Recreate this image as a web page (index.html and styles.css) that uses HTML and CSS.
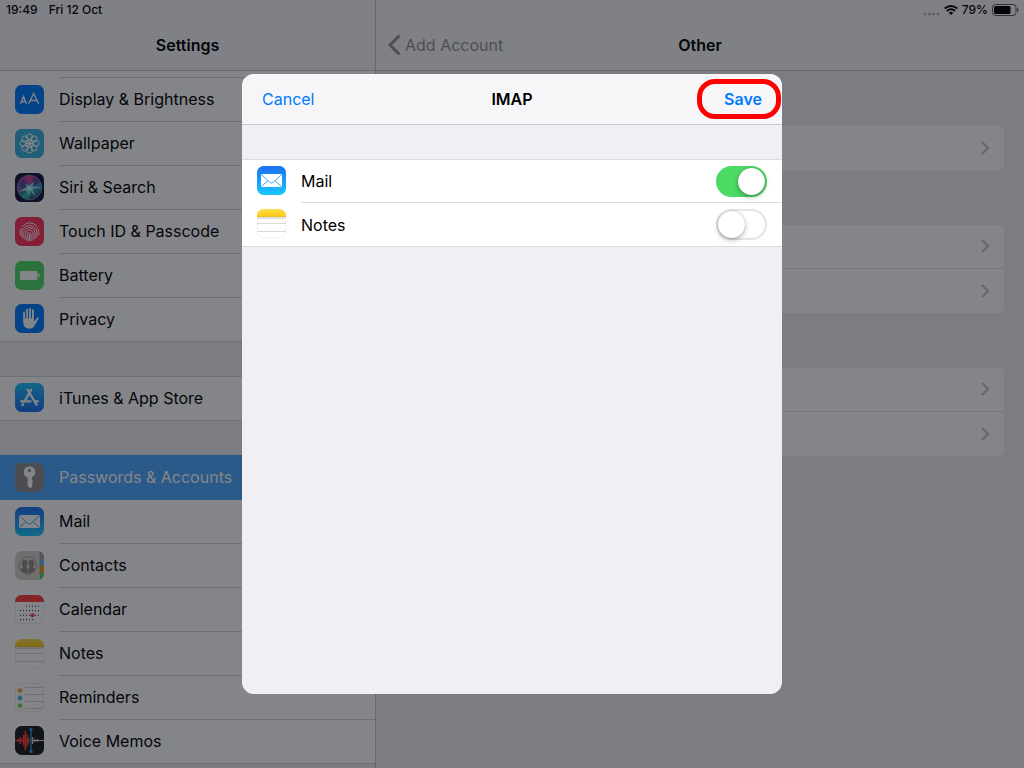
FILE: index.html
```html
<!doctype html>
<html lang="en">
	<head>
		<meta charset="utf-8">
		<meta name="viewport" content="width=device-width, initial-scale=1">

		<title>Settings</title>

		<link rel="stylesheet" href="styles.css">
	</head>

	<body>

		<!-- shared shapes -->
		<svg class="sprites" width="0" height="0" aria-hidden="true">
			<defs>
				<linearGradient id="mail-bg" x1="0" y1="0" x2="0" y2="1">
					<stop offset="0" stop-color="#1d6ff2"/>
					<stop offset="1" stop-color="#1ac8fc"/>
				</linearGradient>
				<linearGradient id="store-bg" x1="0" y1="0" x2="0" y2="1">
					<stop offset="0" stop-color="#19c0fb"/>
					<stop offset="1" stop-color="#1d6df0"/>
				</linearGradient>
				<linearGradient id="notes-bg" x1="0" y1="0" x2="0" y2="1">
					<stop offset="0" stop-color="#ffdc4e"/>
					<stop offset="1" stop-color="#fdc90c"/>
				</linearGradient>
				<linearGradient id="siri-ball" x1="0.3" y1="0" x2="0.6" y2="1">
					<stop offset="0" stop-color="#8a3f9e"/>
					<stop offset="0.45" stop-color="#4a4a8c"/>
					<stop offset="0.7" stop-color="#2b8f96"/>
					<stop offset="1" stop-color="#2a3f80"/>
				</linearGradient>
				<radialGradient id="siri-glow">
					<stop offset="0" stop-color="#fff"/>
					<stop offset="0.4" stop-color="#8ff0ee" stop-opacity="0.7"/>
					<stop offset="1" stop-color="#35c8c8" stop-opacity="0"/>
				</radialGradient>
			</defs>
			<symbol id="icon-mail" viewBox="0 0 29 29">
				<rect width="29" height="29" rx="6.5" fill="url(#mail-bg)"/>
				<rect x="4" y="8" width="21" height="13" rx="1.6" fill="#fff"/>
				<path d="M4.8 8.8l8 7.600q1.700 1.400 3.400 0l8-7.600M4.800 20.200l6.300-5.600M24.200 20.200l-6.300-5.600" fill="none" stroke="#2d97f6" stroke-width="0.9"/>
			</symbol>
			<symbol id="icon-notes" viewBox="0 0 29 29">
				<rect x="0.25" y="0.25" width="28.5" height="28.5" rx="6.3" fill="#fff" stroke="#dcdcdc" stroke-width="0.5"/>
				<path d="M0 8V6.5A6.5 6.5 0 0 1 6.5 0h16A6.5 6.5 0 0 1 29 6.5V8z" fill="url(#notes-bg)"/>
				<path d="M0 8h29" stroke="#bfae72" stroke-width="0.7"/>
				<path d="M1 9.6h27" stroke="#aaa" stroke-width="0.8" stroke-dasharray="0.8 0.8"/>
				<path d="M0 14.500h29M0 22.500h29" stroke="#cfcfcf" stroke-width="0.8"/>
			</symbol>
			<symbol id="chevron" viewBox="0 0 8 14">
				<path d="M1 1l6 6-6 6" fill="none" stroke="currentColor" stroke-width="2"/>
			</symbol>
		</svg>

		<div class="screen">
			<aside class="sidebar">
				<div class="status">
					<span>19:49</span>
					<span>Fri 12 Oct</span>
				</div>
				<header class="navbar">
					<h1>Settings</h1>
				</header>

				<nav class="menu">
					<div class="group first">
						<a class="row" href="#">
							<svg class="icon" viewBox="0 0 29 29">
								<rect width="29" height="29" rx="6.5" fill="#007aff"/>
								<path d="M5.500 18.800l3-7.300 3 7.300M6.500 16.500h4M13.500 18.800L18.600 8.500l5.100 10.300M15.100 15.500h7" fill="none" stroke="#fff" stroke-width="1.300"/>
							</svg>
							<span class="label">Display &amp; Brightness</span>
						</a>
						<a class="row" href="#">
							<svg class="icon" viewBox="0 0 29 29">
								<rect width="29" height="29" rx="6.5" fill="#38b2dc"/>
								<g fill="none" stroke="#fff" stroke-width="1">
									<circle cx="14.5" cy="8" r="3"/>
									<circle cx="19.1" cy="9.9" r="3"/>
									<circle cx="21" cy="14.5" r="3"/>
									<circle cx="19.1" cy="19.1" r="3"/>
									<circle cx="14.5" cy="21" r="3"/>
									<circle cx="9.9" cy="19.1" r="3"/>
									<circle cx="8" cy="14.5" r="3"/>
									<circle cx="9.9" cy="9.9" r="3"/>
									<circle cx="14.5" cy="14.5" r="3.8"/>
									<path d="M14.5 10.7v7.6M10.7 14.5h7.6M11.8 11.8l5.4 5.4M17.2 11.8l-5.4 5.4"/>
								</g>
								<circle cx="14.5" cy="14.5" r="1.6" fill="#fff"/>
							</svg>
							<span class="label">Wallpaper</span>
						</a>
						<a class="row" href="#">
							<svg class="icon" viewBox="0 0 29 29">
								<rect width="29" height="29" rx="6.5" fill="#16173a"/>
								<circle cx="14.5" cy="14.5" r="12.200" fill="url(#siri-ball)" stroke="#8c91b8" stroke-width="0.8"/>
								<path d="M14.500 14L9 4.500q5-3 9.500-.5z" fill="#e0409c" fill-opacity="0.7"/>
								<path d="M15 15l10.500-6q1.500 3.500 1 7z" fill="#3c9fe0" fill-opacity="0.6"/>
								<path d="M14 15.500L4.500 20q-2-3-1.500-6z" fill="#c65cc0" fill-opacity="0.5"/>
								<path d="M14 15l-7.500 9q3 2.500 6.500 2.500z" fill="#2fd6b4" fill-opacity="0.600"/>
								<path d="M3.500 18.500q5-1.500 8.500-5l-2-3 4.500 2.500 4.500-5-1.500 5.500 8.500.8-8.500 1.600 3 8-5.500-6.700-.8 8.500-1.800-8.200z" fill="#a8f4f0" fill-opacity="0.850"/>
								<circle cx="14.500" cy="15" r="5" fill="url(#siri-glow)"/>
							</svg>
							<span class="label">Siri &amp; Search</span>
						</a>
						<a class="row" href="#">
							<svg class="icon" viewBox="0 0 29 29">
								<rect width="29" height="29" rx="6.5" fill="#fc3158"/>
								<g fill="none" stroke="#fff" stroke-width="1" stroke-linecap="round">
									<path d="M5.600 17.800c-.8-2-.6-4.400.4-6.200M7.300 9.600c4-5.300 11.600-4.900 14.800.4M23 11.800c1 2 1 4 .7 6"/>
									<path d="M7.300 20.300c-.5-2.500-1-5.700.7-8.300 3-4.700 10.500-4.400 13 .6 1.300 2.700.9 5.300.7 7.500"/>
									<path d="M9.200 21.800c-.3-3-1.200-6 .4-8.500 2.400-3.600 8-3.400 9.800.4 1.100 2.500.6 5.200.4 8"/>
									<path d="M11.200 23c0-3-1.100-6.200 0-8.100 1.500-2.600 5.300-2.300 6.500.2.900 2.200.5 5 .2 7.900"/>
									<path d="M13 23.600c.1-2.500-.9-6 .2-7.500.8-.9 2.200-.7 2.700.5.500 2 .2 4.500.1 7M14.500 17.500v6.300"/>
								</g>
							</svg>
							<span class="label">Touch ID &amp; Passcode</span>
						</a>
						<a class="row" href="#">
							<svg class="icon" viewBox="0 0 29 29">
								<rect width="29" height="29" rx="6.5" fill="#4cd964"/>
								<rect x="5" y="10" width="17.500" height="9" rx="1" fill="#fff"/>
								<path d="M23.300 12.700q1.700.3 1.700 1.800t-1.700 1.800z" fill="#fff"/>
							</svg>
							<span class="label">Battery</span>
						</a>
						<a class="row" href="#">
							<svg class="icon" viewBox="0 0 29 29">
								<rect width="29" height="29" rx="6.5" fill="#007aff"/>
								<g fill="none" stroke="#fff" stroke-width="2" stroke-linecap="round">
									<path d="M9.200 16V8.500M12.100 15V5.700M15 15V5M17.900 16V6.300"/>
									<path d="M19.800 18.500l3-4.300"/>
								</g>
								<path d="M8.200 14h10.700v3.800l1.300-1.500 2 .8-3 5.200q-1.300 2.400-4.500 2.400-6.500 0-6.500-6.500z" fill="#fff"/>
								<path d="M10.650 8v6.500M13.550 6v8.500M16.450 6v8.500" stroke="#007aff" stroke-width="0.8"/>
							</svg>
							<span class="label">Privacy</span>
						</a>
					</div>

					<div class="group">
						<a class="row" href="#">
							<svg class="icon" viewBox="0 0 29 29">
								<rect width="29" height="29" rx="6.5" fill="url(#store-bg)"/>
								<g fill="none" stroke="#fff" stroke-width="2.2" stroke-linecap="round">
									<path d="M12.700 6.600l8.800 15.200M16.300 6.600L9.500 18.400M8 21l-.7 1.300"/>
									<path d="M6 18.400h9.600M19.700 18.400H23"/>
								</g>
							</svg>
							<span class="label">iTunes &amp; App Store</span>
						</a>
					</div>

					<div class="group">
						<a class="row selected" href="#" aria-current="page">
							<svg class="icon" viewBox="0 0 29 29">
								<rect width="29" height="29" rx="6.5" fill="#8e8e93"/>
								<path fill-rule="evenodd" d="M14.500 3.500a5.600 5.600 0 0 1 2.400 10.700v2.300l1.200 1.200-1.200 1.300 1.200 1.300-1.200 1.300.7 1.500-2.100 2.300-2.900-2.400V14.400A5.600 5.600 0 0 1 14.500 3.500zm0 2.200a1.700 1.700 0 1 0 0 3.400 1.700 1.700 0 0 0 0-3.400z" fill="#fff"/>
							</svg>
							<span class="label">Passwords &amp; Accounts</span>
						</a>
						<a class="row" href="#">
							<svg class="icon"><use href="#icon-mail"/></svg>
							<span class="label">Mail</span>
						</a>
						<a class="row" href="#">
							<svg class="icon" viewBox="0 0 29 29">
								<rect width="29" height="29" rx="6.5" fill="#d5d3cc"/>
								<path d="M25 .5Q29 2 29 6.500V8h-4z" fill="#a5a39c"/>
								<path d="M25 8h4v7h-4z" fill="#5cb8f5"/>
								<path d="M25 15h4v7h-4z" fill="#fd9a10"/>
								<path d="M25 22h4q0 5-4 6.500z" fill="#4cd964"/>
								<path d="M25 .5v28" stroke="#8c8a84" stroke-width="0.6"/>
								<circle cx="12.800" cy="14.500" r="8.800" fill="none" stroke="#95938c" stroke-width="0.8"/>
								<path d="M9.600 9c2.800 0 3.200 2 2.900 4.200-.2 1.600-1 1.900-.9 3.100.1 1 1.300 1.100 1.300 2.200v3.800Q7 22.500 5.500 17.800c1-.6 2.200-.5 2.300-1.500 0-1-.7-1.500-.9-3C6.600 11 7 9 9.600 9z" fill="#8f8d86"/>
								<path d="M16.200 9c2.700 0 3 2.100 2.700 4.300-.2 1.500-.9 2-.9 3 .1 1 1.300.9 2.200 1.500q-1.600 4.400-6.700 4.600v-4c0-1 1.200-1.200 1.200-2.100s-.8-1.500-1-3C13.400 11 13.700 9 16.200 9z" fill="#8f8d86"/>
							</svg>
							<span class="label">Contacts</span>
						</a>
						<a class="row" href="#">
							<svg class="icon" viewBox="0 0 29 29">
								<rect x="0.25" y="0.25" width="28.5" height="28.5" rx="6.3" fill="#fff" stroke="#d2d2d2" stroke-width="0.5"/>
								<path d="M0 7V6.500A6.500 6.500 0 0 1 6.500 0h16A6.500 6.500 0 0 1 29 6.500V7z" fill="#fc3d39"/>
								<path d="M11 11.200h13M5 15.600h19M5 20.200h19M5 24.700h13.500" stroke="#222" stroke-width="1" stroke-dasharray="1 2"/>
								<circle cx="17.500" cy="20.200" r="2" fill="#fc3d39"/>
							</svg>
							<span class="label">Calendar</span>
						</a>
						<a class="row" href="#">
							<svg class="icon"><use href="#icon-notes"/></svg>
							<span class="label">Notes</span>
						</a>
						<a class="row" href="#">
							<svg class="icon" viewBox="0 0 29 29">
								<rect x="0.25" y="0.25" width="28.5" height="28.5" rx="6.3" fill="#fff" stroke="#d2d2d2" stroke-width="0.5"/>
								<path d="M10 4.500h18M10 11.500h19M10 18.500h19M10 25.500h17.500" stroke="#c4c4c4" stroke-width="0.8"/>
								<circle cx="5" cy="7.500" r="2.300" fill="#fd9426" stroke="#fed09c"/>
								<circle cx="5" cy="15" r="2.300" fill="#1badf8" stroke="#9bdcfb"/>
								<circle cx="5" cy="22.500" r="2.300" fill="#63da38" stroke="#b8efa5"/>
							</svg>
							<span class="label">Reminders</span>
						</a>
						<a class="row" href="#">
							<svg class="icon" viewBox="0 0 29 29">
								<rect width="29" height="29" rx="6.5" fill="#1c1c1e"/>
								<path d="M0 14.500h3M3.500 13v3M5.200 11v7M6.900 12.500v4M8.600 9v10.500M10.300 5v19M12 8v13M13.700 11.500v6" stroke="#fb3b35" stroke-width="1.500"/>
								<path d="M17.500 11v7M19.200 12.500v4M20.900 13.500v2M22.600 13v3M16 14.500h13" stroke="#d8d8da" stroke-width="1"/>
								<path d="M16 3.500v22" stroke="#1badf8" stroke-width="1.200"/>
								<circle cx="16" cy="3.500" r="1.600" fill="#1badf8"/>
								<circle cx="16" cy="25.500" r="1.600" fill="#1badf8"/>
							</svg>
							<span class="label">Voice Memos</span>
						</a>
					</div>
				</nav>
			</aside>

			<main class="detail">
				<div class="status right">
					<svg width="17" height="4" viewBox="0 0 17 4">
						<g fill="#b4b4b6">
							<circle cx="2" cy="2" r="1.6"/>
							<circle cx="6.3" cy="2" r="1.6"/>
							<circle cx="10.6" cy="2" r="1.6"/>
							<circle cx="14.9" cy="2" r="1.6"/>
						</g>
					</svg>
					<svg width="14" height="10" viewBox="0 0 14 10">
						<g fill="none" stroke="#000" stroke-width="1.9">
							<path d="M.7 3.600q6.300-5 12.600 0"/>
							<path d="M2.900 6q4.100-3.300 8.200 0"/>
						</g>
						<path d="M4.700 7.700q2.300-1.800 4.600 0L7 10z"/>
					</svg>
					<span>79%</span>
					<svg width="27" height="12" viewBox="0 0 27 12">
						<rect x="0.5" y="0.5" width="23.5" height="11" rx="3" fill="none" stroke="#5c5c60"/>
						<rect x="2" y="2" width="16.5" height="8" rx="1.5"/>
						<path d="M25 4q1.600.5 1.600 2T25 8z" fill="#5c5c60"/>
					</svg>
				</div>
				<header class="navbar">
					<button class="back" type="button">
						<svg width="13" height="22" viewBox="0 0 13 22">
							<path d="M11.500 1.500L2 11l9.500 9.500" fill="none" stroke="currentColor" stroke-width="3"/>
						</svg>
						Add Account
					</button>
					<h2>Other</h2>
				</header>

				<div class="cards">
					<div class="card">
						<a href="#" aria-label="Open"><svg class="chevron"><use href="#chevron"/></svg></a>
					</div>
					<div class="card">
						<a href="#" aria-label="Open"><svg class="chevron"><use href="#chevron"/></svg></a>
						<a href="#" aria-label="Open"><svg class="chevron"><use href="#chevron"/></svg></a>
					</div>
					<div class="card">
						<a href="#" aria-label="Open"><svg class="chevron"><use href="#chevron"/></svg></a>
						<a href="#" aria-label="Open"><svg class="chevron"><use href="#chevron"/></svg></a>
					</div>
				</div>
			</main>
		</div>

		<div class="overlay">
			<form class="dialog" role="dialog" aria-labelledby="dialog-title">
				<header class="dialog-bar">
					<button class="cancel" type="button">Cancel</button>
					<h2 id="dialog-title">IMAP</h2>
					<button class="save" type="button">Save</button>
					<span class="highlight"></span>
				</header>
				<div class="group">
					<label class="row">
						<svg class="icon"><use href="#icon-mail"/></svg>
						<span class="label">Mail</span>
						<input class="switch" type="checkbox" checked>
					</label>
					<label class="row">
						<svg class="icon"><use href="#icon-notes"/></svg>
						<span class="label">Notes</span>
						<input class="switch" type="checkbox">
					</label>
				</div>
			</form>
		</div>

	</body>
</html>
```
FILE: styles.css
```css
* {
	box-sizing: border-box;
}

html, body {
	margin: 0;
	height: 100%;
	overflow: hidden;
}

body {
	font-family: Inter, "Liberation Sans", sans-serif;
	font-size: 16px;
	line-height: 20px;
	color: #000;
	background-color: #efeff2;
}

h1, h2 {
	margin: 0;
	font-size: 16px;
	font-weight: 600;
}

button {
	font: inherit;
	padding: 0;
	border: none;
	background: none;
	cursor: pointer;
}

a {
	color: inherit;
	text-decoration: none;
}

.sprites {
	position: absolute;
}

.screen {
	display: flex;
	height: 100%;
}

/* panes */

.sidebar {
	flex: none;
	width: 376px;
	border-right: 1px solid #c4c4c8;
	overflow: hidden;
}

.detail {
	flex: 1;
	overflow: hidden;
}

.status {
	display: flex;
	align-items: center;
	gap: 11px;
	height: 20px;
	padding: 0 5px 0 6px;
	font-size: 12px;
	font-weight: 500;
	background-color: #f7f7f8;
}

.status.right {
	justify-content: flex-end;
	gap: 4px;
}

.status.right svg:first-child {
	margin-top: 8px;
}

.navbar {
	display: grid;
	grid-template-columns: 1fr auto 1fr;
	align-items: center;
	height: 51px;
	padding: 0 12px;
	background-color: #f7f7f8;
	border-bottom: 1px solid #c8c8cc;
}

.navbar h1, .navbar h2 {
	grid-column: 2;
}

.back {
	display: flex;
	align-items: center;
	gap: 4px;
	color: #929292;
}

/* rows */

.group {
	margin-top: 34px;
	background-color: #fff;
	border-top: 1px solid #d4d4d8;
}

.group.first {
	margin-top: 0;
	padding-top: 7px;
	border-top: none;
}

.group.first .row:first-child .label {
	box-shadow: 0 -1px #d4d4d8;
}

.row {
	display: flex;
	align-items: center;
	gap: 15px;
	height: 44px;
	padding-left: 15px;
}

.row:last-child {
	border-bottom: 1px solid #d4d4d8;
}

.icon {
	flex: none;
	width: 29px;
	height: 29px;
	margin-bottom: 2px;
}

.label {
	flex: 1;
	align-self: stretch;
	display: flex;
	align-items: center;
	padding-bottom: 1px;
	border-bottom: 1px solid #d4d4d8;
}

.row:last-child .label {
	border-bottom: none;
}

.row.selected {
	color: #fff;
	background-color: #4aa8ff;
	box-shadow: 0 -1px #4aa8ff;
}

.row.selected .label {
	border-bottom-color: transparent;
}

/* right side cards */

.cards {
	display: flex;
	flex-direction: column;
	gap: 55px;
	padding: 55px 20px;
}

.card {
	background-color: #fff;
	border-radius: 5px;
}

.card a {
	display: flex;
	align-items: center;
	justify-content: flex-end;
	height: 44px;
	padding-right: 15px;
	padding-bottom: 1px;
}

.card a:not(:last-child) {
	border-bottom: 1px solid #e4e4e8;
}

.chevron {
	width: 8px;
	height: 14px;
	color: #c0c0c5;
}

/* dialog */

.overlay {
	position: absolute;
	inset: 0;
	display: flex;
	align-items: center;
	justify-content: center;
	background-color: rgba(10, 12, 20, 0.5);
}

.dialog {
	width: 540px;
	max-width: 100%;
	height: 620px;
	max-height: 100%;
	border-radius: 12px;
	background-color: #efeff4;
	overflow: hidden;
}

.dialog-bar {
	position: relative;
	display: grid;
	grid-template-columns: 1fr auto 1fr;
	align-items: center;
	height: 51px;
	padding: 0 20px;
	background-color: #f6f6f8;
	border-bottom: 1px solid #c8c7cc;
}

.cancel {
	justify-self: start;
	color: #007aff;
}

.save {
	justify-self: end;
	font-weight: 600;
	color: #007aff;
}

.highlight {
	position: absolute;
	top: 5px;
	right: 1px;
	width: 84px;
	height: 40px;
	border: 5px solid #ff0000;
	border-radius: 18px;
	pointer-events: none;
}

.dialog .group {
	border-top: none;
	box-shadow: inset 0 1px #dcdce0;
}

.dialog .label, .dialog .row:last-child {
	border-color: #dcdce0;
}

.dialog .row .label {
	margin-right: -15px;
	padding-bottom: 0;
}

/* separator continues under the switch */
.dialog .row:first-child {
	background: linear-gradient(#dcdce0, #dcdce0) right bottom / 90px 1px no-repeat;
}

.switch {
	appearance: none;
	flex: none;
	width: 51px;
	height: 31px;
	margin: 0 15px 0 0;
	padding: 2px;
	border-radius: 16px;
	background-color: #fff;
	box-shadow: inset 0 0 0 2px #e5e5e5;
	cursor: pointer;
}

.switch::before {
	content: "";
	display: block;
	width: 27px;
	height: 27px;
	border-radius: 50%;
	background-color: #fff;
	box-shadow: 0 2px 5px rgba(0, 0, 0, 0.3), 0 0 1px rgba(0, 0, 0, 0.3);
}

.switch:checked {
	background-color: #4cd964;
	box-shadow: none;
}

.switch:checked::before {
	margin-left: 20px;
}
```
